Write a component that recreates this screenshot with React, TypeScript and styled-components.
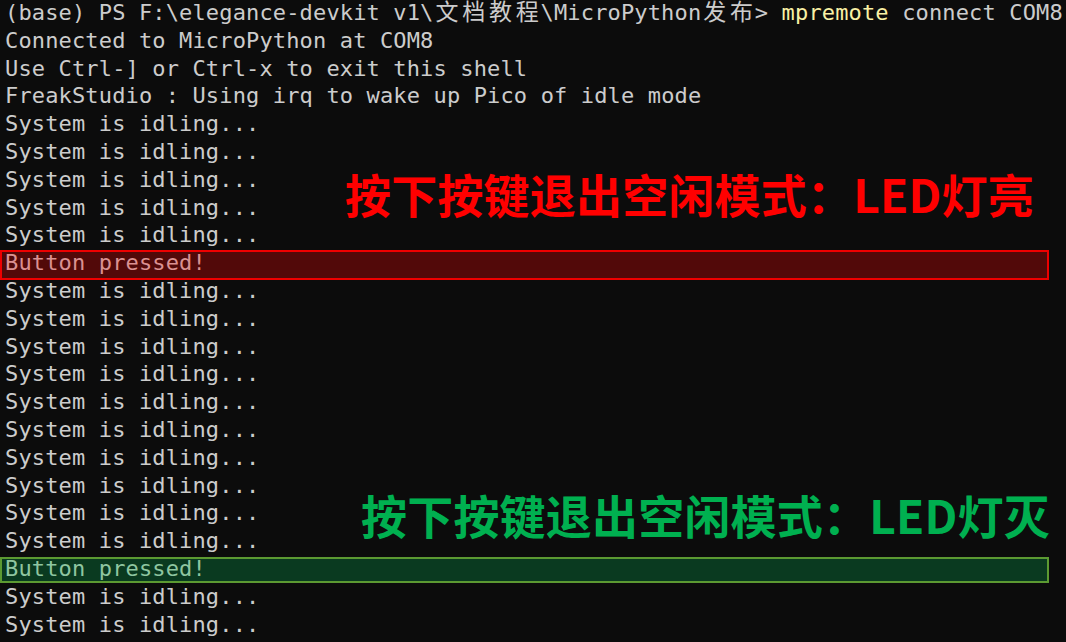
import React from "react";
import styled, { createGlobalStyle } from "styled-components";

const CELL = 13.39;
const ROW = 27.8;

const Global = createGlobalStyle`
  html, body { margin: 0; padding: 0; background: #0c0c0c; }
  body { overflow: hidden; }
`;

const Terminal = styled.div`
  position: relative;
  width: 1066px;
  height: 642px;
  overflow: hidden;
  background: #0c0c0c;
  color: #cccccc;
  font-family: "DejaVu Sans Mono", "Liberation Mono", monospace;
  font-size: 22px;
  letter-spacing: ${CELL - 22 * 0.602}px;
  padding: 0 0 0 5px;
  box-sizing: border-box;
`;

const Lines = styled.div`
  display: flex;
  flex-direction: column;
  margin-top: -1px;
`;

const Line = styled.div<{ $tone?: "red" | "green" }>`
  position: relative;
  height: ${ROW}px;
  line-height: ${ROW}px;
  white-space: pre;
  color: ${(p) =>
    p.$tone === "red" ? "#db9191" : p.$tone === "green" ? "#8fc6a0" : "#cccccc"};
  & > span { position: relative; z-index: 1; }
  &::before {
    content: "";
    display: ${(p) => (p.$tone ? "block" : "none")};
    position: absolute;
    left: -5px;
    right: 17px;
    top: ${(p) => (p.$tone === "red" ? "1px" : "2px")};
    bottom: ${(p) => (p.$tone === "red" ? "-3px" : "0px")};
    box-sizing: border-box;
    background: ${(p) => (p.$tone === "red" ? "#520909" : "#0a3a20")};
    border: 2px solid ${(p) => (p.$tone === "red" ? "#ee0000" : "#5c9a32")};
  }
`;

const WideChar = styled.span`
  display: inline-block;
  width: ${CELL * 2}px;
  text-align: center;
  letter-spacing: 0;
  line-height: 1;
  vertical-align: baseline;
  font-family: "Noto Sans CJK SC", sans-serif;
  font-size: 23px;
`;

const Cmd = styled.span`
  color: #f9f1a5;
`;

const Note = styled.div<{ $color: string; $top: number; $left: number }>`
  position: absolute;
  top: ${(p) => p.$top}px;
  left: ${(p) => p.$left}px;
  color: ${(p) => p.$color};
  font-family: "Noto Sans CJK SC", "Noto Sans", sans-serif;
  font-weight: 700;
  font-size: 46px;
  line-height: 1;
  letter-spacing: 0.2px;
  white-space: nowrap;
`;

const Wide: React.FC<{ text: string }> = ({ text }) => (
  <>
    {Array.from(text).map((c, i) => (
      <WideChar key={i}>{c}</WideChar>
    ))}
  </>
);

const idle = "System is idling...";

export default function App() {
  const rows: { text: React.ReactNode; tone?: "red" | "green" }[] = [
    {
      text: (
        <span>
          (base) PS F:\elegance-devkit v1\<Wide text="文档教程" />\MicroPython
          <Wide text="发布" />
          {"> "}
          <Cmd>mpremote</Cmd> connect COM8
        </span>
      ),
    },
    { text: <span>Connected to MicroPython at COM8</span> },
    { text: <span>Use Ctrl-] or Ctrl-x to exit this shell</span> },
    { text: <span>FreakStudio : Using irq to wake up Pico of idle mode</span> },
    ...Array.from({ length: 5 }, () => ({ text: <span>{idle}</span> })),
    { text: <span>Button pressed!</span>, tone: "red" as const },
    ...Array.from({ length: 10 }, () => ({ text: <span>{idle}</span> })),
    { text: <span>Button pressed!</span>, tone: "green" as const },
    ...Array.from({ length: 2 }, () => ({ text: <span>{idle}</span> })),
  ];

  return (
    <>
      <Global />
      <Terminal>
        <Lines>
          {rows.map((r, i) => (
            <Line key={i} $tone={r.tone}>
              {r.text}
            </Line>
          ))}
        </Lines>
        <Note $color="#ff0000" $top={170} $left={345}>
          按下按键退出空闲模式：LED灯亮
        </Note>
        <Note $color="#00b050" $top={491} $left={361}>
          按下按键退出空闲模式：LED灯灭
        </Note>
      </Terminal>
    </>
  );
}
